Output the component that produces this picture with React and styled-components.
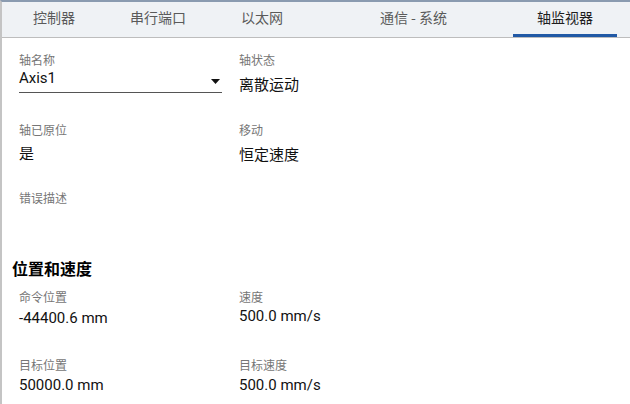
import React from "react";
import styled, { createGlobalStyle } from "styled-components";

const Global = createGlobalStyle`
  html, body { margin: 0; padding: 0; background: #ffffff; }
  body { font-family: Roboto, "Noto Sans CJK SC", "Noto Sans", sans-serif; }
  * { box-sizing: border-box; }
`;

const Page = styled.div`
  width: 630px;
  height: 404px;
  border-top: 2px solid #8a9bb0;
  border-left: 2px solid #c4c4c4;
  overflow: hidden;
  background: #fff;
`;

const TabBar = styled.div`
  display: flex;
  height: 36px;
  background: #eff2f5;
  border-bottom: 1px solid #bdbdbd;
`;

const Tab = styled.div`
  width: ${(p) => p.$w}px;
  height: 35px;
  display: flex;
  align-items: center;
  justify-content: center;
  padding-bottom: 3px;
  font-family: "Noto Sans CJK SC", sans-serif;
  font-size: 14px;
  color: ${(p) => (p.$active ? "#1e1e1e" : "#5a5a5a")};
  border-bottom: 3px solid ${(p) => (p.$active ? "#2159a5" : "transparent")};
`;

const Content = styled.div`
  padding: 14px 0 0 17px;
`;

const Grid = styled.div`
  display: grid;
  grid-template-columns: 220px 220px;
`;

const Field = styled.div`
  display: flex;
  flex-direction: column;
  height: ${(p) => p.$h}px;
`;

const Label = styled.div`
  font-family: "Noto Sans CJK SC", sans-serif;
  font-size: 12px;
  line-height: 16px;
  color: #767676;
`;

const Value = styled.div`
  font-size: 15px;
  line-height: 20px;
  color: #111;
  margin-top: ${(p) => p.$mt ?? 6}px;
`;

const Select = styled.div`
  width: 203px;
  height: 25px;
  display: flex;
  justify-content: space-between;
  border-bottom: 1px solid #555;
  font-size: 15px;
  line-height: 20px;
  color: #111;
`;

const Arrow = styled.svg`
  margin-top: 11px;
  margin-right: 2px;
`;

const SectionTitle = styled.div`
  font-family: "Noto Sans CJK SC", sans-serif;
  font-size: 16px;
  font-weight: 700;
  line-height: 20px;
  color: #000;
  margin: 0 0 11px -7px;
`;

const tabs = [
  { t: "控制器", w: 104 },
  { t: "串行端口", w: 104 },
  { t: "以太网", w: 104 },
  { t: "通信 - 系统", w: 199 },
  { t: "轴监视器", w: 104, active: true },
];

export default function App() {
  return (
    <Page>
      <Global />
      <TabBar>
        {tabs.map((x) => (
          <Tab key={x.t} $w={x.w} $active={x.active}>
            {x.t}
          </Tab>
        ))}
      </TabBar>
      <Content>
        <Grid>
          <Field $h={70}>
            <Label>轴名称</Label>
            <Select>
              <span>Axis1</span>
              <Arrow width="9" height="5" viewBox="0 0 9 5">
                <path d="M0 0 L9 0 L4.5 5 Z" fill="#111" />
              </Arrow>
            </Select>
          </Field>
          <Field $h={70}>
            <Label>轴状态</Label>
            <Value $mt={7}>离散运动</Value>
          </Field>
          <Field $h={68}>
            <Label>轴已原位</Label>
            <Value $mt={6}>是</Value>
          </Field>
          <Field $h={68}>
            <Label>移动</Label>
            <Value $mt={7}>恒定速度</Value>
          </Field>
          <Field $h={68}>
            <Label>错误描述</Label>
          </Field>
          <Field $h={68} />
        </Grid>
        <SectionTitle>位置和速度</SectionTitle>
        <Grid>
          <Field $h={68}>
            <Label>命令位置</Label>
            <Value $mt={3}>-44400.6 mm</Value>
          </Field>
          <Field $h={68}>
            <Label>速度</Label>
            <Value $mt={1}>500.0 mm/s</Value>
          </Field>
          <Field $h={68}>
            <Label>目标位置</Label>
            <Value $mt={2}>50000.0 mm</Value>
          </Field>
          <Field $h={68}>
            <Label>目标速度</Label>
            <Value $mt={2}>500.0 mm/s</Value>
          </Field>
        </Grid>
      </Content>
    </Page>
  );
}
